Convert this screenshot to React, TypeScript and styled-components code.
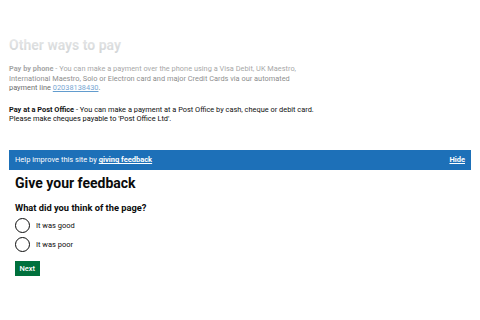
import styled, { createGlobalStyle } from "styled-components";

const GlobalStyle = createGlobalStyle`
  body {
    margin: 0;
    background: #ffffff;
    font-family: Roboto, "Liberation Sans", Arial, sans-serif;
    color: #0b0c0c;
  }
`;

const Page = styled.div`
  padding: 34px 9px 0;
`;

const Faded = styled.section`
  position: relative;

  &::after {
    content: "";
    position: absolute;
    inset: 0;
    background: linear-gradient(
      to bottom,
      rgba(255, 255, 255, 0.88) 0%,
      rgba(255, 255, 255, 0.55) 45%,
      rgba(255, 255, 255, 0) 85%
    );
    pointer-events: none;
  }
`;

const Title = styled.h2`
  margin: 3px 0 11px;
  font-size: 14px;
  line-height: 16px;
  font-weight: 700;
  color: #505a5f;
`;

const Para = styled.p`
  margin: 0 0 12px;
  font-size: 7.4px;
  line-height: 9.6px;
  color: #0b0c0c;

  strong {
    font-weight: 700;
  }
`;

const Phone = styled.a`
  color: #1d70b8;
  text-decoration: underline;
`;

const Banner = styled.div`
  margin-top: 26px;
  display: flex;
  align-items: center;
  justify-content: space-between;
  height: 20px;
  padding: 0 6px;
  background: #1d70b8;
  color: #ffffff;
  font-size: 7.5px;
`;

const BannerLink = styled.a`
  color: #ffffff;
  font-weight: 700;
  text-decoration: underline;
`;

const Form = styled.form`
  padding: 4px 6px 0;
`;

const FormTitle = styled.h1`
  margin: 0 0 10px;
  font-size: 14px;
  line-height: 18px;
  font-weight: 700;
`;

const Question = styled.h3`
  margin: 0 0 4px;
  font-size: 9.3px;
  line-height: 12px;
  font-weight: 700;
`;

const Options = styled.div`
  display: flex;
  flex-direction: column;
  gap: 4px;
`;

const Option = styled.label`
  display: flex;
  align-items: center;
  gap: 6px;
  font-size: 7.5px;
`;

const Circle = styled.span`
  box-sizing: border-box;
  width: 15px;
  height: 15px;
  border: 1.5px solid #0b0c0c;
  border-radius: 50%;
`;

const Button = styled.button`
  margin-top: 9px;
  border: 0;
  border-radius: 0;
  padding: 0 4.5px;
  height: 15px;
  background: #00703c;
  box-shadow: 0 1px 0 #002d18;
  color: #ffffff;
  font-family: inherit;
  font-size: 7.5px;
  font-weight: 500;
`;

export default function App() {
  return (
    <>
      <GlobalStyle />
      <Page>
        <Faded>
          <Title>Other ways to pay</Title>
          <Para>
            <strong>Pay by phone</strong> - You can make a payment over the phone using a Visa Debit, UK Maestro,
            <br />
            International Maestro, Solo or Electron card and major Credit Cards via our automated
            <br />
            payment line <Phone href="#">02038138430</Phone>.
          </Para>
          <Para>
            <strong>Pay at a Post Office</strong> - You can make a payment at a Post Office by cash, cheque or debit card.
            <br />
            Please make cheques payable to 'Post Office Ltd'.
          </Para>
        </Faded>
        <Banner>
          <span>
            Help improve this site by <BannerLink href="#">giving feedback</BannerLink>
          </span>
          <BannerLink href="#">Hide</BannerLink>
        </Banner>
        <Form>
          <FormTitle>Give your feedback</FormTitle>
          <Question>What did you think of the page?</Question>
          <Options>
            <Option>
              <Circle />
              It was good
            </Option>
            <Option>
              <Circle />
              It was poor
            </Option>
          </Options>
          <Button type="button">Next</Button>
        </Form>
      </Page>
    </>
  );
}
